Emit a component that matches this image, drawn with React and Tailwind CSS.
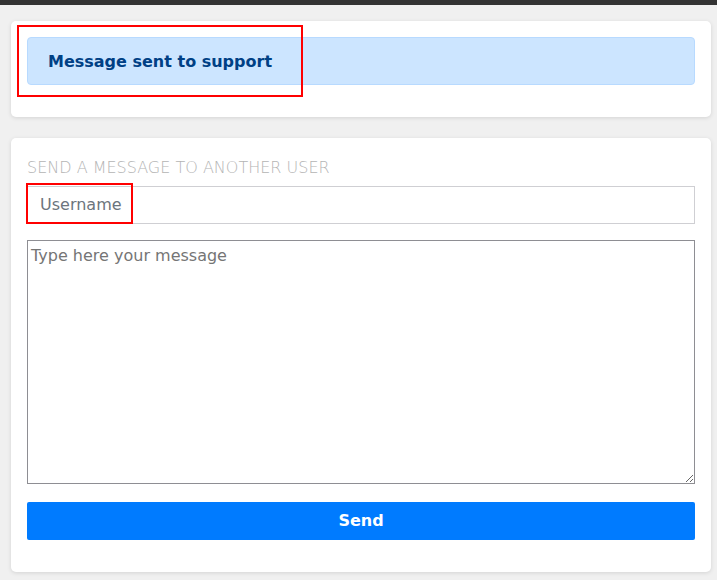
import React from 'react';

const font = { fontFamily: '"DejaVu Sans", "Liberation Sans", sans-serif' };

const App = () => {
  return (
    <div className="relative min-h-[580px] bg-[#f0f0f0] text-[#212529] text-base" style={font}>
      <div className="h-[5px] bg-[#333333]" />

      <div className="pl-[11px] pr-[6px] pt-4 flex flex-col gap-[21px]">
        <div className="bg-white rounded-[5px] shadow-[0_1px_4px_rgba(0,0,0,0.12)] p-4">
          <div className="bg-[#cce5ff] border border-[#b8daff] rounded-[4px] px-5 pt-[12px] pb-[10px] mb-4 text-[#004085] font-bold leading-6">
            Message sent to support
          </div>
        </div>

        <div className="bg-white rounded-[5px] shadow-[0_1px_4px_rgba(0,0,0,0.12)] px-4 pt-[18px] pb-8">
          <h2 className="uppercase font-light text-[#b4b4b4] leading-6 mb-[6px]">
            Send a message to another user
          </h2>
          <input
            type="text"
            placeholder="Username"
            className="block w-full border border-[#cfcfd3] px-3 py-[6px] leading-6 placeholder:text-[#6c757d] outline-none"
          />
          <textarea
            placeholder="Type here your message"
            className="block w-full h-[244px] mt-4 border border-[#8e8e93] px-[3px] pt-[3px] pb-[2px] leading-6 placeholder:text-[#757575] outline-none"
          />
          <button className="block w-full mt-[18px] bg-[#007bff] text-white font-bold leading-6 py-[7px] rounded-[2px]">
            Send
          </button>
        </div>
      </div>

      {/* annotation boxes */}
      <div className="absolute left-[17px] top-[25px] w-[286px] h-[72px] border-2 border-[#ff0000] pointer-events-none" />
      <div className="absolute left-[26px] top-[183px] w-[107px] h-[41px] border-2 border-[#ff0000] pointer-events-none" />
    </div>
  );
};

export default App;
